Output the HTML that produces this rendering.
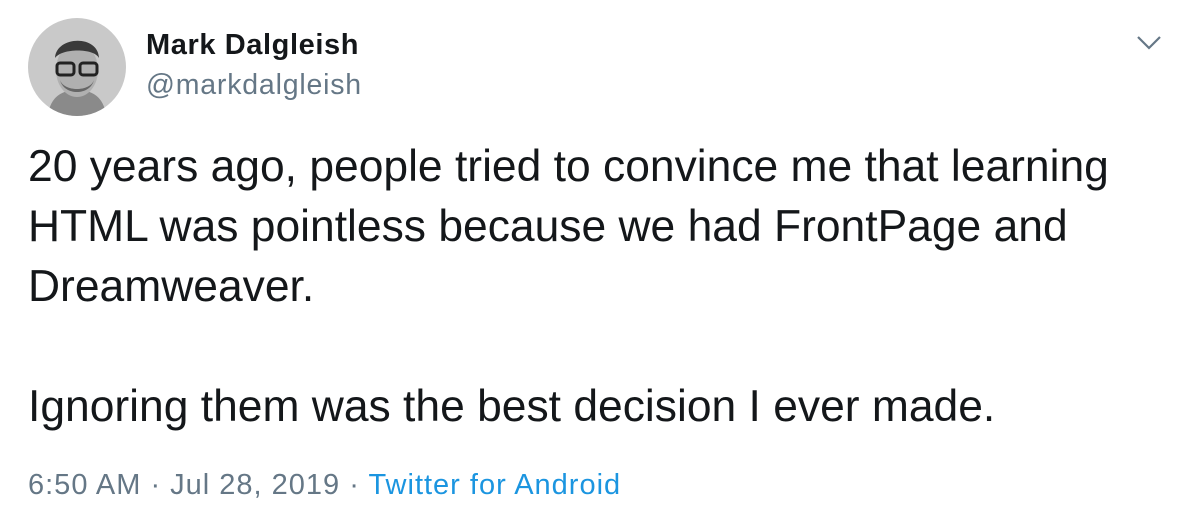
<!DOCTYPE html>
<html><head><meta charset="utf-8"><style>
body{margin:0;width:1192px;height:532px;background:#fff;font-family:"Liberation Sans",Arial,sans-serif;position:relative;overflow:hidden}
.a{position:absolute;white-space:nowrap}
.t{font-size:44.4px;color:#14171a;left:28px;line-height:60px}
</style></head><body>
<svg class="a" style="left:28px;top:18px" width="98" height="98" viewBox="0 0 98 98">
<defs><clipPath id="c"><circle cx="49" cy="49" r="49"/></clipPath></defs>
<g clip-path="url(#c)">
<rect width="98" height="98" fill="#c9c9c9"/>
<path d="M20 98 C22 78 35 72 49 72 C63 72 76 78 78 98Z" fill="#8a8a8a"/>
<ellipse cx="49" cy="52" rx="21" ry="27" fill="#b0b0b0"/>
<path d="M27 40 C28 18 70 16 71 40 C66 30 34 30 27 40Z" fill="#3a3a3a"/>
<path d="M32 62 C36 78 62 78 66 62 C62 74 36 74 32 62Z" fill="#666"/>
<rect x="29" y="45" width="17" height="12" rx="3" fill="none" stroke="#222" stroke-width="3"/>
<rect x="52" y="45" width="17" height="12" rx="3" fill="none" stroke="#222" stroke-width="3"/>
</g></svg>
<div class="a" style="left:146px;top:29px;font-size:29px;letter-spacing:0.6px;font-weight:bold;color:#14171a">Mark Dalgleish</div>
<div class="a" style="left:146px;top:69px;font-size:28.5px;letter-spacing:0.8px;color:#657786">@markdalgleish</div>
<svg class="a" style="left:1136px;top:35px" width="26" height="16" viewBox="0 0 26 16"><path d="M2 2 L13 13 L24 2" fill="none" stroke="#657786" stroke-width="2.2"/></svg>
<div class="a t" style="top:137px">20 years ago, people tried to convince me that learning</div>
<div class="a t" style="top:197px">HTML was pointless because we had FrontPage and</div>
<div class="a t" style="top:257px">Dreamweaver.</div>
<div class="a t" style="top:377px">Ignoring them was the best decision I ever made.</div>
<div class="a" style="left:28px;top:469px;font-size:29px;letter-spacing:1.0px;color:#657786">6:50 AM · Jul 28, 2019 · <span style="color:#1b95e0">Twitter for Android</span></div>
</body></html>
